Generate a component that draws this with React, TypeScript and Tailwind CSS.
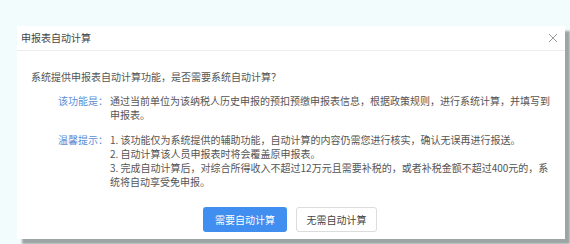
import React from "react";

const font = { fontFamily: '"Noto Sans CJK SC", "Noto Sans", sans-serif' };

export default function App() {
  return (
    <div
      className="w-[570px] h-[244px] overflow-hidden bg-[#f2fcfc] pt-[26px] pl-[17px]"
      style={font}
    >
      <div className="w-[548px] h-[213px] bg-white shadow-[5px_5px_2px_rgba(0,0,0,0.35)] flex flex-col">
        <div className="h-[25px] flex items-center justify-between pl-[4px] pr-[7px] border-b border-[#ececec]">
          <span className="text-[10px] leading-[14px] text-[#444]">申报表自动计算</span>
          <svg width="10" height="10" viewBox="0 0 10 10" className="text-[#9a9a9a]">
            <path d="M1 1L9 9M9 1L1 9" stroke="currentColor" strokeWidth="1" />
          </svg>
        </div>
        <div className="flex flex-col pl-[14px] pt-[19px] text-[10px] leading-[14px] text-[#555]">
          <div className="whitespace-nowrap">系统提供申报表自动计算功能，是否需要系统自动计算？</div>
          <div className="flex mt-[10px]">
            <div className="w-[79px] shrink-0 text-right pr-[2px] text-[#5b8fd6]">该功能是：</div>
            <div className="flex flex-col whitespace-nowrap">
              <span>通过当前单位为该纳税人历史申报的预扣预缴申报表信息，根据政策规则，进行系统计算，并填写到</span>
              <span>申报表。</span>
            </div>
          </div>
          <div className="flex mt-[11px]">
            <div className="w-[79px] shrink-0 text-right pr-[2px] text-[#5b8fd6]">温馨提示：</div>
            <div className="flex flex-col whitespace-nowrap">
              <span>1. 该功能仅为系统提供的辅助功能，自动计算的内容仍需您进行核实，确认无误再进行报送。</span>
              <span>2. 自动计算该人员申报表时将会覆盖原申报表。</span>
              <span>3. 完成自动计算后，对综合所得收入不超过12万元且需要补税的，或者补税金额不超过400元的，系</span>
              <span>统将自动享受免申报。</span>
            </div>
          </div>
        </div>
        <div className="flex gap-[9px] pl-[186px] mt-[18px]">
          <button className="w-[84px] h-[25px] rounded-[3px] bg-[#3f8ef0] text-white text-[10px]">
            需要自动计算
          </button>
          <button className="w-[81px] h-[25px] rounded-[3px] bg-white border border-[#dcdcdc] text-[#444] text-[10px]">
            无需自动计算
          </button>
        </div>
      </div>
    </div>
  );
}
